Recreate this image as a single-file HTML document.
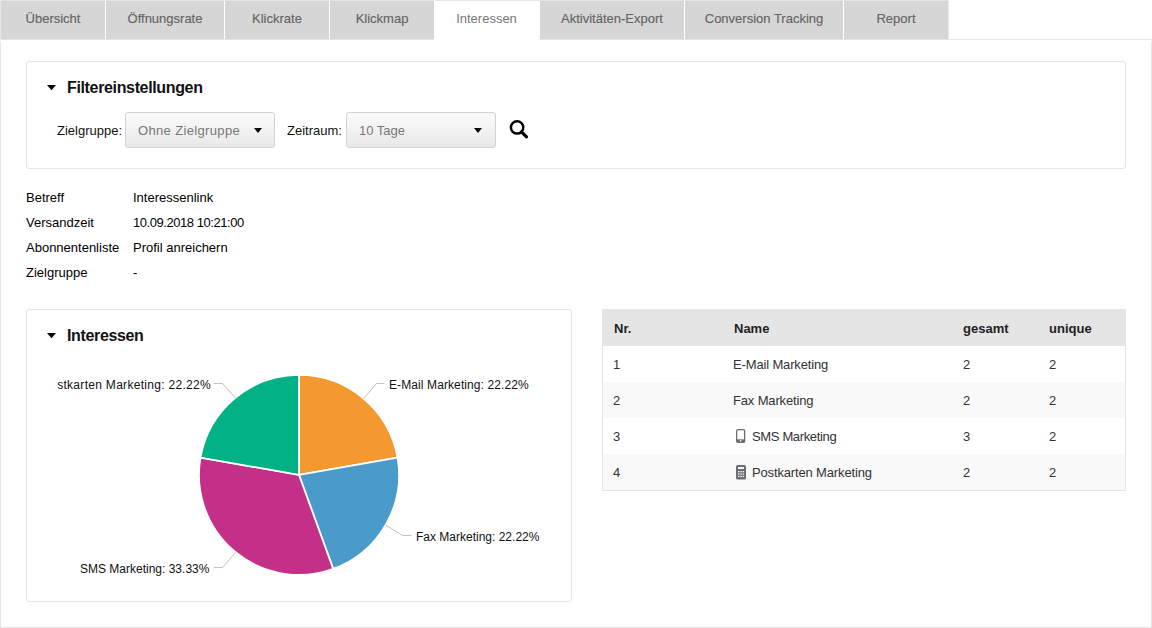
<!DOCTYPE html>
<html><head><meta charset="utf-8">
<style>
html,body{margin:0;padding:0;background:#fff;width:1152px;height:628px;overflow:hidden;position:relative;font-family:"Liberation Sans",sans-serif;}
.a{position:absolute;box-sizing:border-box;}
.t{position:absolute;white-space:nowrap;line-height:13px;font-size:13px;color:#000;}
.tb{color:#333;letter-spacing:-0.15px;}
.tab{position:absolute;top:1px;height:38px;background:#d6d6d6;}
.tabt{position:absolute;top:11px;white-space:nowrap;font-size:13px;line-height:13px;color:#646464;-webkit-text-stroke:0.15px currentColor;width:100%;text-align:center;}
.sel{position:absolute;top:112px;height:36px;width:150px;border:1px solid #d2d2d2;border-radius:3px;background:linear-gradient(#fbfbfb,#e8e8e8);box-sizing:border-box;}
.caret{position:absolute;width:0;height:0;border-left:4.5px solid transparent;border-right:4.5px solid transparent;border-top:5px solid #111;}
.row{position:absolute;left:603px;width:522px;height:36px;}
</style></head><body>

<!-- top strip / tab bar -->
<div class="a" style="left:0;top:0;width:949px;height:1px;background:#e6e6e6"></div>
<div class="a" style="left:0;top:0;width:1px;height:628px;background:#e6e6e6"></div>
<div class="a" style="left:948px;top:0;width:1px;height:39px;background:#e9e9e9"></div>
<div class="a" style="left:0;top:39px;width:1152px;height:1px;background:#e6e6e6"></div>
<div class="a" style="left:0;top:40px;width:1px;height:1px;background:#fff"></div>
<div class="a" style="left:1151px;top:41px;width:1px;height:587px;background:#e6e6e6"></div>
<div class="a" style="left:0;top:627px;width:1152px;height:1px;background:#e6e6e6"></div>

<div class="tab" style="left:1px;width:104px"><div class="tabt">Übersicht</div></div>
<div class="tab" style="left:106px;width:118px"><div class="tabt">Öffnungsrate</div></div>
<div class="tab" style="left:225px;width:104px"><div class="tabt">Klickrate</div></div>
<div class="tab" style="left:330px;width:104px"><div class="tabt">Klickmap</div></div>
<div class="tab" style="left:434px;width:105px;height:40px;background:#fff"><div class="tabt" style="color:#777;-webkit-text-stroke:0">Interessen</div></div>
<div class="tab" style="left:540px;width:144px"><div class="tabt">Aktivitäten-Export</div></div>
<div class="tab" style="left:685px;width:158px"><div class="tabt">Conversion Tracking</div></div>
<div class="tab" style="left:844px;width:104px"><div class="tabt">Report</div></div>

<div class="a" style="left:434px;top:0;width:1px;height:1px;background:#fff"></div>
<!-- filter box -->
<div class="a" style="left:26px;top:61px;width:1100px;height:108px;border:1px solid #e6e6e6;border-radius:3px"></div>
<svg class="a" style="left:46px;top:84px" width="12" height="8"><polygon points="1,1 10,1 5.5,6.2" fill="#000"/></svg>
<div class="t" style="left:67px;top:80px;font-size:16px;line-height:16px;font-weight:bold;color:#111;letter-spacing:-0.35px">Filtereinstellungen</div>

<div class="t" style="left:57px;top:124px;color:#111">Zielgruppe:</div>
<div class="sel" style="left:125px"></div>
<div class="t" style="left:138px;top:124px;color:#777;letter-spacing:0.35px">Ohne Zielgruppe</div>
<svg class="a" style="left:253px;top:127px" width="11" height="8"><polygon points="1,1 9,1 5,6" fill="#000"/></svg>

<div class="t" style="left:287px;top:124px;color:#111">Zeitraum:</div>
<div class="sel" style="left:346px"></div>
<div class="t" style="left:359px;top:124px;color:#777">10 Tage</div>
<svg class="a" style="left:473px;top:127px" width="11" height="8"><polygon points="1,1 9,1 5,6" fill="#000"/></svg>

<svg class="a" style="left:505px;top:115px" width="28" height="28" viewBox="0 0 28 28">
 <circle cx="12.1" cy="12.4" r="6.2" fill="none" stroke="#000" stroke-width="2.5"/>
 <line x1="16.5" y1="16.8" x2="21.5" y2="21.8" stroke="#000" stroke-width="3.2" stroke-linecap="round"/>
</svg>

<!-- info -->
<div class="t" style="left:26px;top:191px">Betreff</div>
<div class="t" style="left:133px;top:191px">Interessenlink</div>
<div class="t" style="left:26px;top:216px">Versandzeit</div>
<div class="t" style="left:133px;top:216px;letter-spacing:-0.45px">10.09.2018 10:21:00</div>
<div class="t" style="left:26px;top:241px">Abonnentenliste</div>
<div class="t" style="left:133px;top:241px">Profil anreichern</div>
<div class="t" style="left:26px;top:266px">Zielgruppe</div>
<div class="t" style="left:133px;top:266px">-</div>

<!-- interessen panel -->
<div class="a" style="left:26px;top:309px;width:546px;height:293px;border:1px solid #e6e6e6;border-radius:3px"></div>
<svg class="a" style="left:46px;top:332px" width="12" height="8"><polygon points="1,1 10,1 5.5,6.2" fill="#000"/></svg>
<div class="t" style="left:67px;top:328px;font-size:16px;line-height:16px;font-weight:bold;color:#111;letter-spacing:-0.35px">Interessen</div>

<svg class="a" style="left:0;top:0" width="1152" height="628">
 <g stroke="#fff" stroke-width="1.7" stroke-linejoin="round">
  <path d="M299,474.9 L299.00,374.90 A100,100 0 0 1 397.48,457.54 Z" fill="#f3992f"/>
  <path d="M299,474.9 L397.48,457.54 A100,100 0 0 1 333.20,568.87 Z" fill="#4a9aca"/>
  <path d="M299,474.9 L333.20,568.87 A100,100 0 0 1 200.52,457.54 Z" fill="#c42f88"/>
  <path d="M299,474.9 L200.52,457.54 A100,100 0 0 1 299.00,374.90 Z" fill="#02b185"/>
 </g>
 <g fill="none" stroke="#c2c2c2" stroke-width="1">
  <path d="M362.5,400 L376.5,383.5 L384.5,383.5"/>
  <path d="M385.5,525 L402.5,535.5 L411.5,535.5"/>
  <path d="M236,552 L222.5,567.5 L214,567.5"/>
  <path d="M236.5,399 L222.5,383.5 L214,383.5"/>
 </g>
</svg>
<div class="t" style="left:389px;top:379px;font-size:12px;line-height:12px;color:#111;letter-spacing:0.1px">E-Mail Marketing: 22.22%</div>
<div class="t" style="left:416px;top:531px;font-size:12px;line-height:12px;color:#111">Fax Marketing: 22.22%</div>
<div class="t" style="left:80px;top:563px;font-size:12px;line-height:12px;color:#111">SMS Marketing: 33.33%</div>
<div class="t" style="right:941px;top:379px;font-size:12px;line-height:12px;color:#111;letter-spacing:0.3px">stkarten Marketing: 22.22%</div>

<!-- table -->
<div class="a" style="left:602px;top:309px;width:524px;height:182px;border:1px solid #e5e5e5"></div>
<div class="row" style="top:310px;background:#e5e5e5"></div>
<div class="row" style="top:346px;background:#fff"></div>
<div class="row" style="top:382px;background:#f9f9f9"></div>
<div class="row" style="top:418px;background:#fff"></div>
<div class="row" style="top:454px;background:#f9f9f9"></div>

<div class="t" style="left:614px;top:322px;font-weight:bold;color:#222">Nr.</div>
<div class="t" style="left:734px;top:322px;font-weight:bold;color:#222">Name</div>
<div class="t" style="left:963px;top:322px;font-weight:bold;color:#222">gesamt</div>
<div class="t" style="left:1049px;top:322px;font-weight:bold;color:#222">unique</div>

<div class="t tb" style="left:613px;top:358px">1</div>
<div class="t tb" style="left:733px;top:358px">E-Mail Marketing</div>
<div class="t tb" style="left:963px;top:358px">2</div>
<div class="t tb" style="left:1049px;top:358px">2</div>

<div class="t tb" style="left:613px;top:394px">2</div>
<div class="t tb" style="left:733px;top:394px">Fax Marketing</div>
<div class="t tb" style="left:963px;top:394px">2</div>
<div class="t tb" style="left:1049px;top:394px">2</div>

<div class="t tb" style="left:613px;top:430px">3</div>
<svg class="a" style="left:736px;top:429px" width="10" height="15" viewBox="0 0 10 15">
 <rect x="0.65" y="0.65" width="8" height="12.8" rx="1.4" fill="none" stroke="#6b6e73" stroke-width="1.3"/>
 <rect x="0.65" y="10.3" width="8" height="3.15" fill="#6b6e73"/>
 <circle cx="4.65" cy="11.9" r="0.8" fill="#fff"/>
</svg>
<div class="t tb" style="left:752px;top:430px;letter-spacing:-0.35px">SMS Marketing</div>
<div class="t tb" style="left:963px;top:430px">3</div>
<div class="t tb" style="left:1049px;top:430px">2</div>

<div class="t tb" style="left:613px;top:466px">4</div>
<svg class="a" style="left:736px;top:465px" width="10" height="15" viewBox="0 0 10 15">
 <rect x="0" y="0" width="10" height="14.5" rx="1.6" fill="#6b6e73"/>
 <rect x="2" y="2" width="6" height="2" fill="#fff" opacity="0.92"/>
 <g fill="#fff" opacity="0.9">
  <rect x="2" y="6" width="1.5" height="1.3"/><rect x="4.3" y="6" width="1.5" height="1.3"/><rect x="6.6" y="6" width="1.5" height="1.3"/>
  <rect x="2" y="8.4" width="1.5" height="1.3"/><rect x="4.3" y="8.4" width="1.5" height="1.3"/><rect x="6.6" y="8.4" width="1.5" height="1.3"/>
  <rect x="2" y="10.8" width="1.5" height="1.3"/><rect x="4.3" y="10.8" width="1.5" height="1.3"/><rect x="6.6" y="10.8" width="1.5" height="1.3"/>
 </g>
</svg>
<div class="t tb" style="left:752px;top:466px">Postkarten Marketing</div>
<div class="t tb" style="left:963px;top:466px">2</div>
<div class="t tb" style="left:1049px;top:466px">2</div>

</body></html>
